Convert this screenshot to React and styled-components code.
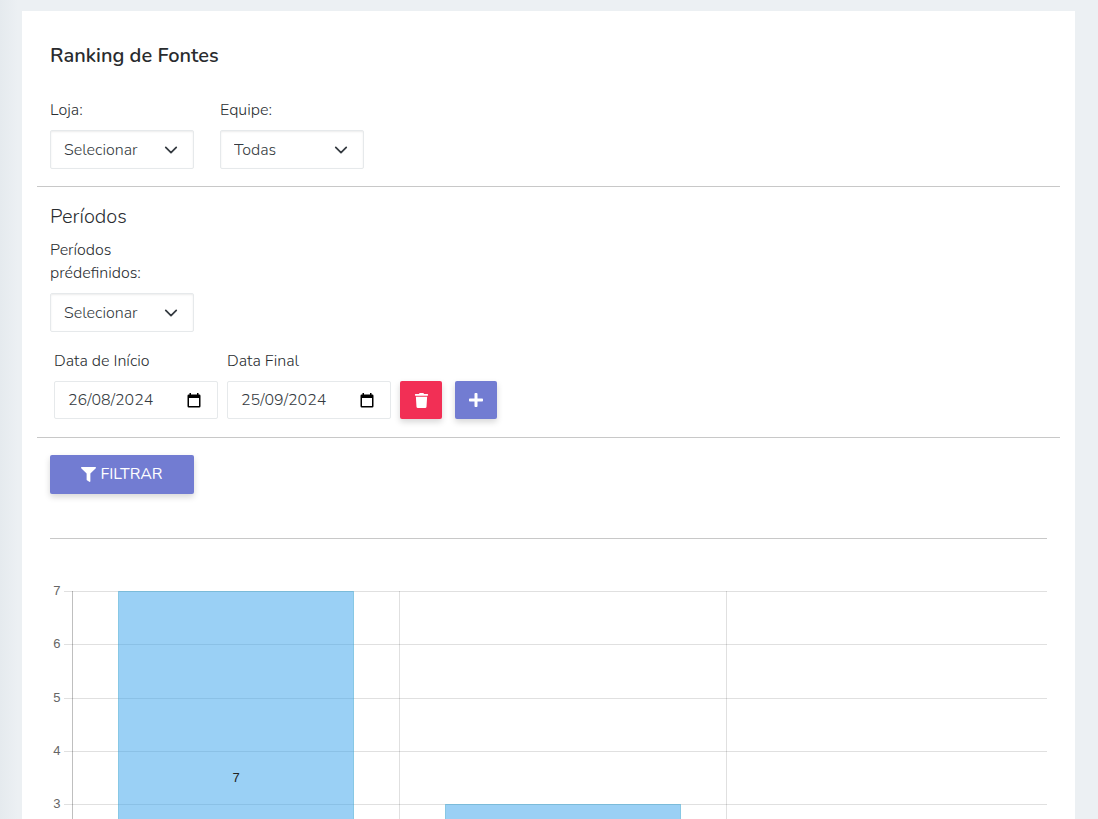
import React, { useState } from 'react';
import styled, { createGlobalStyle } from 'styled-components';
import { FaTrash, FaPlus, FaFilter } from 'react-icons/fa';

const GlobalStyle = createGlobalStyle`
*, *::before, *::after {
  box-sizing: border-box;
}
body {
  margin: 0;
  font-family: Nunito, Lato, sans-serif;
  font-size: 16px;
  font-weight: 300;
  line-height: 23px;
  color: #292d31;
}
`

const Page = styled.div`
min-height: 100vh;
padding: 11px 23px 0 22px;
background: linear-gradient(to right, #e5eaee, #ecf0f3 18px);
`

const Card = styled.main`
background-color: #fff;
padding: 33px 15px 0;
`

const Section = styled.section`
padding: 0 13px;
`

const Title = styled.h1`
margin: 0 0 32px;
font-size: 20px;
line-height: 23px;
font-weight: 600;
color: #292b2e;
`

const SubTitle = styled.h2`
margin: 0 0 9px;
font-size: 20px;
line-height: 26px;
font-weight: 300;
`

const Divider = styled.hr`
height: 1px;
border: 0;
background-color: #c8c8c8;
margin: ${props => props.gap || "17px 0"};
`

const Row = styled.div`
display: flex;
flex-wrap: wrap;
align-items: flex-end;
gap: ${props => props.gap || "26px"};
`

const DateRow = styled(Row)`
padding-left: 4px;
margin-top: 18px;
`

const Field = styled.div`
display: flex;
flex-direction: column;
gap: 8px;
width: ${props => props.w || "144px"};
`

const Label = styled.label`
max-width: 110px;
`

const SelectBox = styled.div`
display: grid;
align-items: center;

select, svg {
  grid-area: 1 / 1;
}
svg {
  justify-self: end;
  margin-right: 16px;
  pointer-events: none;
}
`

const Select = styled.select`
appearance: none;
width: 100%;
height: 39px;
padding: 1px 36px 0 13px;
border: 1px solid #e6e9eb;
border-radius: 2px;
background-color: #fff;
box-shadow: inset 0 1px 2px rgba(0, 0, 0, 0.08);
font: inherit;
color: #343a40;
`

const DateBox = styled.div`
display: flex;
align-items: center;
height: 38px;
padding: 0 16px 0 13px;
border: 1px solid #e6e9eb;
border-radius: 2px;
`

const DateInput = styled.input`
flex: 1;
min-width: 0;
padding: 0;
border: 0;
outline: 0;
background: none;
font: inherit;
color: #343a40;
`

const PickerButton = styled.button`
display: flex;
padding: 0;
border: 0;
background: none;
`

const Button = styled.button`
display: flex;
align-items: center;
justify-content: center;
gap: 4px;
width: ${props => props.w || "42px"};
height: ${props => props.h || "38px"};
padding: 0;
border: 0;
border-radius: 2px;
background-color: ${props => props.bg || "#727cd2"};
box-shadow: 0 3px 6px rgba(0, 0, 0, 0.16);
font: inherit;
font-weight: 400;
color: #fff;
cursor: pointer;
`

const Actions = styled.div`
display: flex;
gap: 13px;
`

const ChartSvg = styled.svg`
display: block;
width: 100%;
height: auto;
font-family: "Liberation Sans", Arial, sans-serif;
font-size: 13px;
font-weight: 400;
`

const sources = [
  { value: 7, showValue: true },
  { value: 3, showValue: false },
];
const ticks = [7, 6, 5, 4, 3];
const top = 36;
const step = 53.33;
const colWidth = 327;
const barWidth = 235;
const chartHeight = 264;

const yOf = (value) => Math.round(top + (7 - value) * step) + 0.5;

const Chevron = () => (
  <svg width="14" height="14" viewBox="0 0 16 16" fill="none" stroke="#343a40" strokeWidth="2" strokeLinecap="round" strokeLinejoin="round">
    <path d="M2 5l6 6 6-6" />
  </svg>
)

const CalendarIcon = () => (
  <svg width="14" height="15" viewBox="0 0 14 15" fill="#000">
    <path fillRule="evenodd" d="M2.5 0H4v1.5h6V0h1.5v1.5h.7A1.3 1.3 0 0 1 13.5 2.8v10.4a1.3 1.3 0 0 1-1.3 1.3H1.8A1.3 1.3 0 0 1 .5 13.2V2.8a1.3 1.3 0 0 1 1.3-1.3h.7zM2 5v8h10V5z" />
  </svg>
)

const SelectField = ({ id, label, options }) => (
  <Field>
    <Label htmlFor={id}>{label}</Label>
    <SelectBox>
      <Select id={id}>
        {options.map((option) => <option key={option}>{option}</option>)}
      </Select>
      <Chevron />
    </SelectBox>
  </Field>
)

const DateField = ({ id, label, value, onChange }) => (
  <Field w="164px">
    <Label htmlFor={id}>{label}</Label>
    <DateBox>
      <DateInput id={id} type="text" value={value} onChange={(e) => onChange(e.target.value)} />
      <PickerButton type="button" aria-label={label}>
        <CalendarIcon />
      </PickerButton>
    </DateBox>
  </Field>
)

const Chart = () => (
  <ChartSvg viewBox={`0 0 997 ${chartHeight}`}>
    {ticks.map((tick) => (
      <g key={tick}>
        <path d={`M14 ${yOf(tick)}H997`} stroke="rgba(0, 0, 0, 0.12)" />
        <text x="10.500" y={yOf(tick) + 3.5} textAnchor="end" fill="#666">{tick}</text>
      </g>
    ))}
    {[0, 1, 2].map((col) => (
      <path
        key={col}
        d={`M${22.5 + col * colWidth} ${top}V${chartHeight}`}
        stroke={col === 0 ? 'rgba(0, 0, 0, 0.25)' : 'rgba(0, 0, 0, 0.12)'}
      />
    ))}
    {sources.map(({ value, showValue }, ind) => {
      const x = 68.5 + ind * colWidth
      const y = yOf(value)
      const bottom = yOf(0)
      return (
        <g key={ind}>
          <rect x={x} y={y} width={barWidth} height={bottom - y} fill="rgba(54, 162, 235, 0.5)" stroke="rgba(54, 162, 205, 0.45)" />
          {showValue && (
            <text x={x + barWidth / 2} y={(y + bottom) / 2 + 4} textAnchor="middle" fill="#222">{value}</text>
          )}
        </g>
      )
    })}
  </ChartSvg>
)

const App = () => {
  const [start, setStart] = useState('26/08/2024');
  const [end, setEnd] = useState('25/09/2024');

  return (
    <Page>
      <GlobalStyle />
      <Card>
        <Section>
          <Title>Ranking de Fontes</Title>
          <Row>
            <SelectField id="loja" label="Loja:" options={['Selecionar']} />
            <SelectField id="equipe" label="Equipe:" options={['Todas']} />
          </Row>
        </Section>
        <Divider />
        <Section>
          <SubTitle>Períodos</SubTitle>
          <SelectField id="periodo" label="Períodos prédefinidos:" options={['Selecionar']} />
          <DateRow gap="9px">
            <DateField id="inicio" label="Data de Início" value={start} onChange={setStart} />
            <DateField id="final" label="Data Final" value={end} onChange={setEnd} />
            <Actions>
              <Button type="button" bg="#f22f55" aria-label="Remover"><FaTrash size={15} /></Button>
              <Button type="button" aria-label="Adicionar"><FaPlus size={16} /></Button>
            </Actions>
          </DateRow>
        </Section>
        <Divider gap="18px 0 17px" />
        <Section>
          <Button type="submit" w="144px" h="39px"><FaFilter size={15} />FILTRAR</Button>
          <Divider gap="44px 0 16px" />
          <Chart />
        </Section>
      </Card>
    </Page>
  );
}

export default App;
